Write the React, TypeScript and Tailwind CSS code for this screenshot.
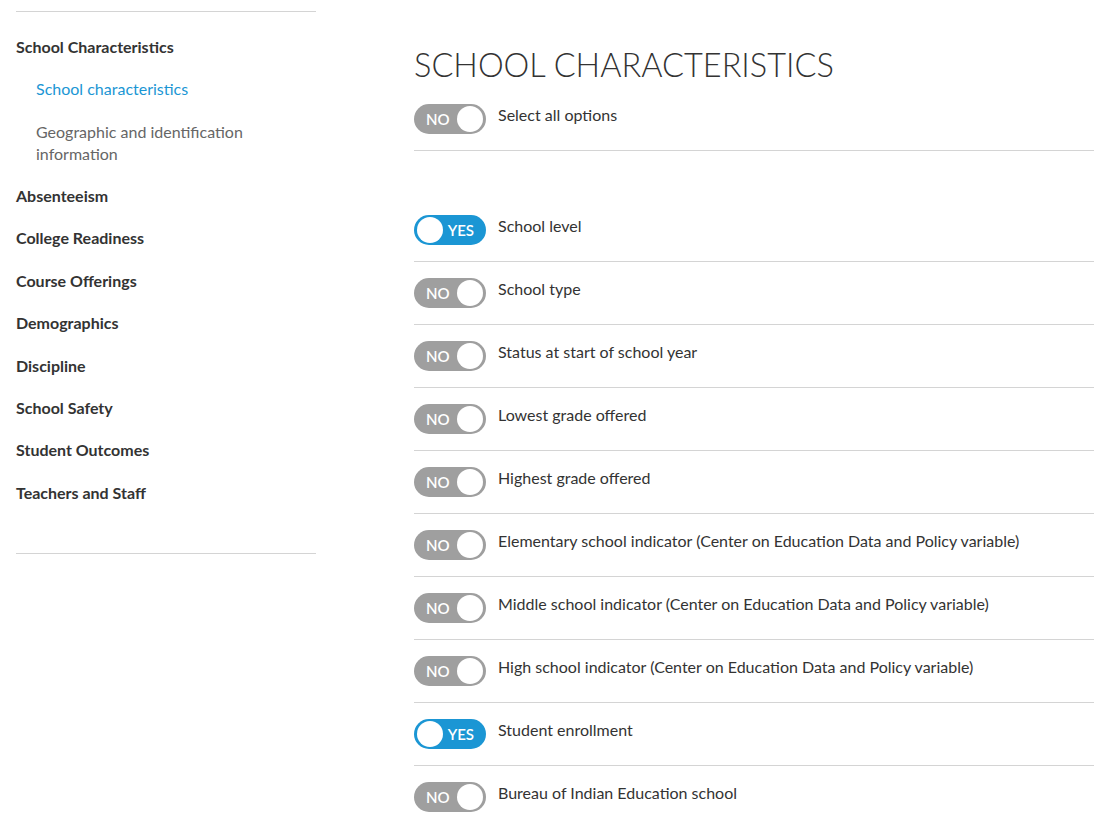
import { useState } from 'react';

const categories = [
  'Absenteeism',
  'College Readiness',
  'Course Offerings',
  'Demographics',
  'Discipline',
  'School Safety',
  'Student Outcomes',
  'Teachers and Staff',
];

const initialOptions = [
  { label: 'School level', on: true },
  { label: 'School type', on: false },
  { label: 'Status at start of school year', on: false },
  { label: 'Lowest grade offered', on: false },
  { label: 'Highest grade offered', on: false },
  { label: 'Elementary school indicator (Center on Education Data and Policy variable)', on: false },
  { label: 'Middle school indicator (Center on Education Data and Policy variable)', on: false },
  { label: 'High school indicator (Center on Education Data and Policy variable)', on: false },
  { label: 'Student enrollment', on: true },
  { label: 'Bureau of Indian Education school', on: false },
];

function Toggle({ on, onClick }: { on: boolean; onClick: () => void }) {
  return (
    <button
      onClick={onClick}
      className={`relative flex h-[30px] w-[72px] shrink-0 items-center rounded-full ${
        on ? 'bg-[#1b96d4] justify-end pr-[12px]' : 'bg-[#9f9f9f] justify-start pl-[12px]'
      }`}
    >
      <span className="text-[15px] font-semibold leading-none text-white">{on ? 'YES' : 'NO'}</span>
      <span
        className={`absolute top-[2px] h-[26px] w-[26px] rounded-full bg-white ${
          on ? 'left-[3px]' : 'right-[3px]'
        }`}
      />
    </button>
  );
}

export default function App() {
  const [options, setOptions] = useState(initialOptions);
  const allOn = options.every(o => o.on);

  const flip = (i: number) =>
    setOptions(prev => prev.map((o, j) => (j === i ? { ...o, on: !o.on } : o)));

  return (
    <div className="flex min-h-screen bg-white text-[#333] font-['Lato','Open_Sans',sans-serif]">
      {/* Sidebar */}
      <aside className="ml-[16px] mt-[11px] w-[300px] shrink-0">
        <div className="border-t border-[#d4d4d4] pt-[24px] pb-[49px]">
          <div className="text-[16px] font-bold leading-[22px]">School Characteristics</div>
          <div className="mt-[20px] pl-[20px] text-[16px] leading-[22px] text-[#1b96d4]">
            School characteristics
          </div>
          <div className="mt-[21px] pl-[20px] text-[16px] leading-[22px] text-[#666]">
            Geographic and identification
            <br />
            information
          </div>
          <div className="mt-[20px] flex flex-col gap-[20.4px]">
            {categories.map(c => (
              <div key={c} className="text-[16px] font-bold leading-[22px]">
                {c}
              </div>
            ))}
          </div>
        </div>
        <div className="border-t border-[#d4d4d4]" />
      </aside>

      {/* Main */}
      <main className="ml-[98px] mr-[24px] flex-1 pt-[45px]">
        <h1 className="text-[32.5px] font-light leading-[40px] text-[#333]">
          SCHOOL CHARACTERISTICS
        </h1>
        <div className="mt-[19px] flex items-start gap-[12px] border-b border-[#d4d4d4] pb-[16px]">
          <Toggle
            on={allOn}
            onClick={() => setOptions(prev => prev.map(o => ({ ...o, on: !allOn })))}
          />
          <span className="text-[16px] leading-[22px]">Select all options</span>
        </div>
        <div className="mt-[48px]">
          {options.map((o, i) => (
            <div
              key={o.label}
              className="flex items-start gap-[12px] border-b border-[#d4d4d4] pt-[16px] pb-[16px]"
            >
              <Toggle on={o.on} onClick={() => flip(i)} />
              <span className="text-[16px] leading-[22px]">{o.label}</span>
            </div>
          ))}
        </div>
      </main>
    </div>
  );
}
